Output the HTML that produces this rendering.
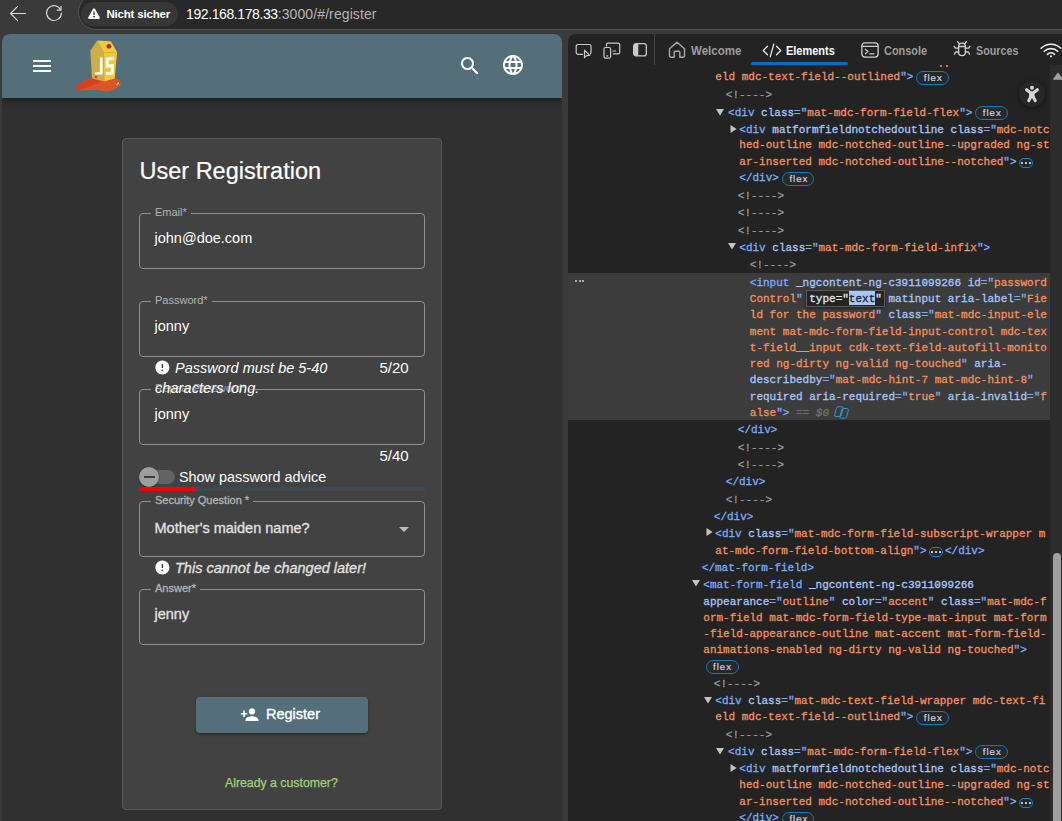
<!DOCTYPE html>
<html lang="en">
<head>
<meta charset="utf-8">
<title>OWASP Juice Shop - User Registration</title>
<style>
*{box-sizing:border-box;margin:0;padding:0}
html,body{width:1062px;height:821px;overflow:hidden}
body{position:relative;background:#3a3a3a;font-family:"Liberation Sans",sans-serif;color:#fff}
.abs{position:absolute}
svg{display:block}

/* ---------- browser chrome ---------- */
#chrome{position:absolute;left:0;top:0;width:1062px;height:34px;background:#3a3a3a}
#addr{position:absolute;left:78px;top:-6px;width:1000px;height:36px;border-radius:18px 0 0 18px;background:#282828;border:1px solid #555}
#chip{position:absolute;left:81px;top:2px;width:97px;height:24px;border-radius:12px;background:#373737}
#chiptxt{position:absolute;left:106.500px;top:6px;font-size:11.500px;letter-spacing:-.2px;line-height:16px;font-weight:bold;color:#fff;white-space:nowrap}
#url{position:absolute;left:186px;top:5px;font-size:14px;line-height:18px;color:#fff;white-space:nowrap}
#url span{color:#b4b4b4;letter-spacing:.1px}

/* ---------- page ---------- */
#page{position:absolute;left:2px;top:34px;width:560px;height:787px;background:#303030;border-radius:8px 8px 0 0;overflow:hidden}
#tb{position:absolute;left:0;top:0;width:560px;height:64px;background:#546e7a;box-shadow:0 2px 4px -1px rgba(0,0,0,.2),0 4px 5px 0 rgba(0,0,0,.14),0 1px 10px 0 rgba(0,0,0,.12)}
#card{position:absolute;left:120px;top:104px;width:320px;height:672px;background:#424242;border:1px solid #595959;border-radius:4px}
#title{-webkit-text-stroke:.2px;position:absolute;left:16.500px;top:17.300px;font-size:23.500px;line-height:30px;color:#fff;white-space:nowrap}
.ff{position:absolute;left:16px;width:286px;height:56px;border:1px solid #8f8f8f;border-radius:4px}
.ff .lb{position:absolute;left:11px;top:-9px;padding:0 4px;background:#424242;font-size:11px;line-height:14px;color:#b5b5b5;white-space:nowrap}
.ff .val{position:absolute;left:14.500px;top:13.800px;font-size:14.500px;line-height:20px;color:#fff;white-space:nowrap}
.hint{position:absolute;font-size:14.5px;line-height:18px;font-style:italic;color:#fff;white-space:nowrap}
.cnt{position:absolute;font-size:15px;line-height:18px;color:#fff;white-space:nowrap}
.hv{-webkit-text-stroke:.3px}.val.hv,.hint.hv{color:#e2e2e2}
.ei{position:absolute;width:16.800px;height:16.800px;fill:#fff}

/* ---------- devtools ---------- */
#dt{position:absolute;left:568px;top:34px;width:494px;height:787px;background:#232323;border-radius:8px 0 0 0;overflow:hidden}
#dtabs{position:absolute;left:0;top:0;width:494px;height:31px}
.tab{position:absolute;top:9px;font-size:13px;line-height:16px;font-weight:bold;color:#9d9d9d;white-space:nowrap;transform-origin:0 50%}
#hl{position:absolute;left:568px;top:273px;width:482px;height:147px;background:#3c3c3c}
#sb{position:absolute;left:1050px;top:65px;width:12px;height:756px;background:#2c2c2c}
#sbt{position:absolute;left:1053px;top:553px;width:8px;height:280px;border-radius:4px;background:#9f9f9f}
.ln{position:absolute;font-family:"Liberation Mono",monospace;font-size:11px;line-height:16px;height:16px;white-space:pre;color:#e3e3e3;-webkit-text-stroke:.3px}
.t{color:#7cacf8}.n{color:#a8c7fa}.v{color:#f29160}.c{color:#999999}
.ar{position:absolute;fill:#c4c4c4}
.bd{display:inline-block;vertical-align:top;margin:1.400px 0 0 3px;height:14px;padding:0 5px 0 6.500px;border:1px solid #1379b8;border-radius:7px;background:#282828;font-family:"Liberation Sans",sans-serif;font-size:9.700px;line-height:12.300px;color:#c9d4e6;letter-spacing:.95px;-webkit-text-stroke:.2px}
.bd.dots{-webkit-text-stroke:0;padding:0 0 0 .5px;margin-left:2px;margin-right:2.400px;height:10px;margin-top:4px;width:14px;letter-spacing:0;font-size:0;line-height:0;border-color:#1585c5;border-radius:5px;position:relative}
.bd.dots i{display:inline-block;width:2.200px;height:2.200px;border-radius:.6px;background:#c3d4f3;margin:3px .9px 0 .9px;vertical-align:top}
.ed{display:inline-block;vertical-align:top;height:17px;margin:-1px -3.500px 0 -3.500px;padding:0 2.500px;border:1px solid #5a5a5a;background:#242424;color:#e6e6e6;box-shadow:0 1px 3px rgba(0,0,0,.5);line-height:16px}
.sel{background:#a8c7fa;color:#1d1d1d;display:inline-block;vertical-align:top;height:14.600px;line-height:16px}
.eq{color:#6f6f6f;font-style:italic}
.cp{display:inline-block;vertical-align:top;margin:1px 0 0 4.700px}
</style>
</head>
<body>

<!-- ================= browser chrome ================= -->
<div id="chrome">
  <svg class="abs" style="left:9px;top:5px" width="18" height="17" viewBox="0 0 18 17" fill="none" stroke="#dadada" stroke-width="1.150" stroke-linecap="round" stroke-linejoin="round"><path d="M16.500 8.500H2M8.600 1.400 1.600 8.500l7 7.100"/></svg>
  <svg class="abs" style="left:45px;top:4px" width="18" height="18" viewBox="0 0 18 18" fill="none" stroke="#dadada" stroke-width="1.150" stroke-linecap="round" stroke-linejoin="round"><path d="M15.700 5.900A7.400 7.400 0 1 0 16.400 9"/><path d="M16 2.200v3.900h-3.900"/></svg>
  <div id="addr"></div>
  <div id="chip"></div>
  <svg class="abs" style="left:88px;top:8px" width="12" height="11" viewBox="0 0 12 11"><path d="M6 .3c.4 0 .8.2 1 .6l4.7 8.300000000000001c.4.8-.1 1.7-1 1.7H1.3c-.9 0-1.4-.9-1-1.7L5 .9c.2-.4.6-.6 1-.6z" fill="#fff"/><rect x="5.3" y="3.3" width="1.4" height="3.8" rx=".7" fill="#373737"/><circle cx="6" cy="8.7" r=".9" fill="#373737"/></svg>
  <div id="chiptxt">Nicht sicher</div>
  <div id="url"><b style="font-weight:normal;letter-spacing:-.4px">192.168.178.33</b><span>:3000/#/register</span></div>
</div>

<!-- ================= page ================= -->
<div id="page">
  <div id="tb">
    <svg class="abs" style="left:28px;top:20px" width="24" height="24" viewBox="0 0 24 24" fill="#fff"><path d="M3 18h18v-2H3v2zm0-5h18v-2H3v2zm0-7v2h18V6H3z"/></svg>
    <!-- juice carton logo -->
    <svg class="abs" style="left:64px;top:0" width="64" height="64" viewBox="0 0 64 64">
      <path d="M9 54.500C10 51 19 47 26 43.500L38 47 49 44.200C54.500 45.500 56.500 49.500 53.500 52 49 55.500 44.500 58.200 39 57.300 31 55 21 56.300 12.500 56.300 9.500 56.300 8.600 55.500 9 54.500Z" fill="#dd5426"/>
      <path d="M9 54.500C10 51 19 47 26 43.500L36 47 28 51C22 53 14 56 12.500 56.300 9.500 56.300 8.600 55.500 9 54.500Z" fill="#d63f1f"/>
      <polygon points="24.300,16.800 31.200,6.400 37.800,18.700 38.200,47.600 26.100,44.400" fill="#cfae45"/>
      <polygon points="31.200,6.400 44.800,7.300 51.100,17.900 37.800,18.700" fill="#efc93f"/>
      <polygon points="37.800,18.700 51.100,17.900 48.700,44.400 38.200,47.600" fill="#f3c738"/>
      <circle cx="42.900" cy="12.300" r="2.400" fill="#b32a1a"/>
      <path d="M33.900 23.400h2.700v17.200h-7.800v-2.300h5.100z" fill="#fff"/>
      <path d="M39.800 23.400l8.500-.7v3l-5.600.5v4.200l5.300-.5-.5 10.400-7.500 1v-3l4.800-.6.200-4.500-5.200.5z" fill="#fff"/>
      <circle cx="29.800" cy="43" r="1.300" fill="#d63f1f"/>
      <path d="M50.500 50.500l2-2.500.4 1.500-1.400 1.600z" fill="#fff"/>
    </svg>
    <svg class="abs" style="left:456px;top:20px" width="24" height="24" viewBox="0 0 24 24" fill="#fff"><path d="M15.5 14h-.79l-.28-.27C15.410 12.590 16 11.110 16 9.500 16 5.910 13.090 3 9.500 3S3 5.910 3 9.500 5.910 16 9.500 16c1.610 0 3.090-.59 4.230-1.570l.27.28v.79l5 4.990L20.490 19l-4.990-5zm-6 0C7.010 14 5 11.990 5 9.500S7.010 5 9.500 5 14 7.010 14 9.500 11.990 14 9.500 14z"/></svg>
    <svg class="abs" style="left:499px;top:19px" width="24" height="24" viewBox="0 0 24 24" fill="#fff"><path d="M11.990 2C6.470 2 2 6.480 2 12s4.470 10 9.990 10C17.520 22 22 17.520 22 12S17.520 2 11.990 2zm6.930 6h-2.950c-.32-1.250-.78-2.450-1.380-3.560 1.840.63 3.370 1.910 4.330 3.560zM12 4.040c.83 1.200 1.480 2.530 1.910 3.960h-3.820c.43-1.430 1.080-2.760 1.910-3.960zM4.260 14C4.100 13.360 4 12.690 4 12s.1-1.360.26-2h3.380c-.08.66-.14 1.320-.14 2 0 .68.060 1.340.14 2H4.260zm.82 2h2.950c.32 1.250.78 2.450 1.380 3.560-1.840-.63-3.370-1.900-4.330-3.560zm2.950-8H5.080c.96-1.660 2.490-2.930 4.330-3.560C8.810 5.550 8.350 6.750 8.030 8zM12 19.960c-.83-1.200-1.480-2.530-1.910-3.960h3.820c-.43 1.430-1.080 2.760-1.910 3.960zM14.340 14H9.660c-.09-.66-.16-1.320-.16-2 0-.68.070-1.350.16-2h4.680c.09.65.16 1.320.16 2 0 .68-.07 1.340-.16 2zm.25 5.560c.6-1.110 1.060-2.310 1.380-3.560h2.950c-.96 1.650-2.490 2.930-4.330 3.560zM16.360 14c.08-.66.14-1.320.14-2 0-.68-.06-1.340-.14-2h3.380c.16.64.26 1.310.26 2s-.1 1.360-.26 2h-3.380z"/></svg>
  </div>

  <div id="card">
    <div id="title">User Registration</div>

    <!-- Email -->
    <div class="ff" style="top:74px"><span class="lb">Email*</span><span class="val">john@doe.com</span></div>

    <!-- Password -->
    <div class="ff" style="top:162px"><span class="lb">Password*</span><span class="val">jonny</span></div>
    <svg class="ei" style="left:30.900px;top:220.200px" viewBox="0 0 24 24"><path d="M12 2C6.480 2 2 6.480 2 12s4.480 10 10 10 10-4.480 10-10S17.520 2 12 2zm1 15h-2v-2h2v2zm0-4h-2V7h2v6z"/></svg>
    <div class="hint" style="left:52px;top:220px">Password must be 5-40</div>
    <div class="cnt" style="left:256.400px;top:220px">5/20</div>

    <!-- Repeat password (label hidden behind wrapped hint) -->
    <div class="ff" style="top:250px"><span class="lb" style="color:#a0a0a0">Repeat Password*</span><span class="val">jonny</span></div>
    <div class="hint" style="left:32px;top:240px;letter-spacing:.08px">characters long.</div>
    <div class="cnt" style="left:256.400px;top:308px">5/40</div>

    <!-- toggle -->
    <div class="abs" style="left:20px;top:331px;width:32px;height:14px;border-radius:7px;background:#636363"></div>
    <div class="abs" style="left:16px;top:328px;width:20px;height:20px;border-radius:10px;background:#9e9e9e;box-shadow:0 1px 2px rgba(0,0,0,.4)"></div>
    <div class="abs" style="left:20.500px;top:337px;width:11px;height:2px;background:#3c3c3c"></div>
    <div class="abs" style="left:56px;top:328px;font-size:14.400px;line-height:20px;color:#fff;white-space:nowrap" id="spa">Show password advice</div>
    <!-- strength bar -->
    <div class="abs" style="left:16px;top:348px;width:286px;height:4px;background:#3e4a51"></div>
    <div class="abs" style="left:16px;top:348px;width:57px;height:4px;background:#fb0000"></div>

    <!-- Security question -->
    <div class="ff" style="top:362px"><span class="lb hv">Security Question *</span><span class="val hv" style="top:15.800px">Mother's maiden name?</span>
      <svg class="abs" style="left:259px;top:25px" width="10" height="5" viewBox="0 0 10 5"><path d="M0 0h10L5 5z" fill="#bdbdbd"/></svg>
    </div>
    <svg class="ei" style="left:30.900px;top:420.200px" viewBox="0 0 24 24"><path d="M12 2C6.480 2 2 6.480 2 12s4.480 10 10 10 10-4.480 10-10S17.520 2 12 2zm1 15h-2v-2h2v2zm0-4h-2V7h2v6z"/></svg>
    <div class="hint hv" style="left:52px;top:420px">This cannot be changed later!</div>

    <!-- Answer -->
    <div class="ff" style="top:450px"><span class="lb hv">Answer*</span><span class="val hv" style="top:13.600px">jenny</span></div>

    <!-- Register button -->
    <div class="abs" id="btn" style="left:73px;top:558px;width:172px;height:36px;border-radius:4px;background:#546e7a;box-shadow:0 3px 1px -2px rgba(0,0,0,.2),0 2px 2px 0 rgba(0,0,0,.14),0 1px 5px 0 rgba(0,0,0,.12)">
      <svg class="abs" style="left:43.700px;top:8px" width="19.200" height="19.200" viewBox="0 0 24 24" fill="#fff"><path d="M15 12c2.210 0 4-1.790 4-4s-1.790-4-4-4-4 1.790-4 4 1.790 4 4 4zm-9-2V7H4v3H1v2h3v3h2v-3h3v-2H6zm9 4c-2.670 0-8 1.340-8 4v2h16v-2c0-2.660-5.330-4-8-4z"/></svg>
      <div class="abs" id="btntxt" style="-webkit-text-stroke:.35px;left:70px;top:7px;font-size:14.500px;line-height:20px;color:#fff;white-space:nowrap">Register</div>
    </div>

    <div class="abs" id="already" style="left:102px;top:636px;-webkit-text-stroke:.25px;font-size:12.300px;line-height:16px;color:#a0d471;white-space:nowrap">Already a customer?</div>
  </div>
</div>

<!-- ================= devtools ================= -->
<div id="dt">
  <div id="dtabs">
    <!-- inspect -->
    <svg class="abs" style="left:7px;top:9px" width="18" height="16" viewBox="0 0 18 16" fill="none" stroke="#c9c9c9" stroke-width="1.200" stroke-linejoin="round"><path d="M8 11.400H3A1.800 1.800 0 0 1 1.200 9.600V3.300A1.800 1.800 0 0 1 3 1.500h11.200A1.800 1.800 0 0 1 16 3.300v6.300a1.800 1.800 0 0 1-1 1.600"/><path d="M9.500 7.200v7.500l2-2 3.200-.2z"/></svg>
    <!-- device -->
    <svg class="abs" style="left:35px;top:8px" width="18" height="17" viewBox="0 0 18 17" fill="none" stroke="#c9c9c9" stroke-width="1.200" stroke-linejoin="round"><path d="M3.500 4.500V2.800A1.600 1.600 0 0 1 5.100 1.200h10A1.600 1.600 0 0 1 16.700 2.800v7.400a1.600 1.600 0 0 1-1.600 1.600H9.800"/><rect x="1" y="5.500" width="6.600" height="10.700" rx="1.500"/><path d="M3.800 13.900h1M10 9h2.600" stroke-linecap="round"/></svg>
    <!-- dock -->
    <svg class="abs" style="left:64.500px;top:9px" width="14" height="13.500" viewBox="0 0 15 14" preserveAspectRatio="none"><rect x=".7" y=".7" width="13.600" height="12.600" rx="2.500" fill="none" stroke="#c9c9c9" stroke-width="1.400"/><path d="M3.200 .7h2.500v12.600H3.200A2.500 2.500 0 0 1 .7 10.800V3.200A2.500 2.500 0 0 1 3.200 .7z" fill="#c9c9c9"/></svg>
    <div class="abs" style="left:86px;top:0;width:1px;height:31px;background:#454545"></div>
    <!-- home -->
    <svg class="abs" style="left:100px;top:7px" width="18" height="17" viewBox="0 0 18 17" fill="none" stroke="#a9a9a9" stroke-width="1.400" stroke-linejoin="round"><path d="M1.500 7.800 9 1.200l7.500 6.600v7a1.400 1.400 0 0 1-1.400 1.400h-3.300v-5a1 1 0 0 0-1-1H7.200a1 1 0 0 0-1 1v5H2.900a1.400 1.400 0 0 1-1.400-1.400z"/></svg>
    <div class="tab" id="t1" style="left:123px;transform:scaleX(.887)">Welcome</div>
    <!-- code icon -->
    <svg class="abs" style="left:194px;top:9px" width="20" height="15" viewBox="0 0 20 15" fill="none" stroke="#ededed" stroke-width="1.250" stroke-linecap="round" stroke-linejoin="round"><path d="M5.500 3.200 1.200 7.500l4.300 4.300M14.500 3.200l4.300 4.300-4.300 4.300M11.800 1.200 8.200 13.800"/></svg>
    <div class="tab" id="t2" style="left:218.400px;color:#fff;transform:scaleX(.843)">Elements</div>
    <div class="abs" style="left:183px;top:28px;width:97px;height:3px;border-radius:1.500px;background:#0f6cbd"></div>
    <!-- console icon -->
    <svg class="abs" style="left:293px;top:8px" width="18" height="16" viewBox="0 0 18 16" fill="none" stroke="#d0d0d0" stroke-width="1.300" stroke-linecap="round" stroke-linejoin="round"><rect x=".9" y=".9" width="16.200" height="14.200" rx="3"/><path d="M.9 4.300h16.200M4.300 7.300l2.600 2.200-2.600 2.200M8.800 11.900h4.200"/></svg>
    <div class="tab" id="t3" style="left:316px;transform:scaleX(.842)">Console</div>
    <!-- bug icon -->
    <svg class="abs" style="left:385px;top:6px" width="18" height="18" viewBox="0 0 18 18" fill="none" stroke="#d0d0d0" stroke-width="1.300" stroke-linecap="round" stroke-linejoin="round"><path d="M5.600 6.500a3.400 3.400 0 0 1 6.800 0v5.700a3.400 3.400 0 0 1-6.800 0z"/><path d="M6.200 3.700 4.600 1.600M11.800 3.700l1.600-2.100M5.600 8.200H2.400L1.200 6.300M12.400 8.200h3.200l1.200-1.900M5.600 12H2.600l-1.200 2.200M12.400 12h3l1.200 2.200M5.600 6.500h6.800"/></svg>
    <div class="tab" id="t4" style="left:408px;transform:scaleX(.828)">Sources</div>
    <!-- wifi -->
    <svg class="abs" style="left:472px;top:9px" width="22" height="15" viewBox="0 0 22 15" fill="none" stroke="#efefef" stroke-width="1.600" stroke-linecap="round"><path d="M1.200 5.200a14 14 0 0 1 19.600 0M4.300 8.300a9.600 9.600 0 0 1 13.400 0M7.400 11.300a5.200 5.200 0 0 1 7.200 0"/><circle cx="11" cy="13.300" r="1.100" fill="#efefef" stroke="none"/></svg>
  </div>
</div>
<div id="hl"></div>
<div class="abs" style="left:575px;top:280px;width:9px;height:3px">
  <i class="abs" style="left:0;top:0;width:2px;height:2px;border-radius:1px;background:#d5d5d5"></i>
  <i class="abs" style="left:3.500px;top:0;width:2px;height:2px;border-radius:1px;background:#d5d5d5"></i>
  <i class="abs" style="left:7px;top:0;width:2px;height:2px;border-radius:1px;background:#d5d5d5"></i>
</div>
<div id="sb"></div>
<div id="sbt"></div>
<svg class="abs" style="left:1052.500px;top:71.700px" width="10" height="8" viewBox="0 0 10 8"><path d="M5 .8 9.700 7.300H.3z" fill="#a3a3a3" stroke="#a3a3a3" stroke-width=".8" stroke-linejoin="round"/></svg>
<!-- stray pixels of the clipped previous line -->
<div class="abs" style="left:940px;top:65px;width:2px;height:2px;background:#c9774f"></div>
<div class="abs" style="left:946px;top:65px;width:2px;height:2px;background:#c9774f"></div>

<div id="codewrap">
<div class="ln" style="left:715.3px;top:69.3px"><span class="v">eld mdc-text-field--outlined</span><span class="t">"&gt;</span><span class="bd">flex</span></div>
<div class="ln" style="left:725.8px;top:87.4px"><span class="c">&lt;!----&gt;</span></div>
<div class="ln" style="left:728.1px;top:105.0px"><span class="t">&lt;div</span><span class="n"> class</span><span class="t">="</span><span class="v">mat-mdc-form-field-flex</span><span class="t">"&gt;</span><span class="bd">flex</span></div>
<svg class="ar" style="left:716.0px;top:108.8px" width="8" height="7" viewBox="0 0 8 7"><path d="M0 0H8L4 6.600Z"/></svg>
<div class="ln" style="left:739.3px;top:121.8px"><span class="t">&lt;div</span><span class="n"> matformfieldnotchedoutline class</span><span class="t">="</span><span class="v">mdc-notc</span></div>
<svg class="ar" style="left:729.5px;top:124.5px" width="7" height="8" viewBox="0 0 7 8"><path d="M0.5 0V8L6.6 4Z"/></svg>
<div class="ln" style="left:739.3px;top:137.4px"><span class="v">hed-outline mdc-notched-outline--upgraded ng-st</span></div>
<div class="ln" style="left:739.3px;top:153.6px"><span class="v">ar-inserted mdc-notched-outline--notched</span><span class="t">"&gt;</span><span class="bd dots"><i></i><i></i><i></i></span></div>
<div class="ln" style="left:739.3px;top:170.4px"><span class="t">&lt;/div&gt;</span><span class="bd">flex</span></div>
<div class="ln" style="left:737.8px;top:188.4px"><span class="c">&lt;!----&gt;</span></div>
<div class="ln" style="left:737.8px;top:205.4px"><span class="c">&lt;!----&gt;</span></div>
<div class="ln" style="left:737.8px;top:222.6px"><span class="c">&lt;!----&gt;</span></div>
<div class="ln" style="left:739.3px;top:239.6px"><span class="t">&lt;div</span><span class="n"> class</span><span class="t">="</span><span class="v">mat-mdc-form-field-infix</span><span class="t">"&gt;</span></div>
<svg class="ar" style="left:728.0px;top:243.4px" width="8" height="7" viewBox="0 0 8 7"><path d="M0 0H8L4 6.600Z"/></svg>
<div class="ln" style="left:749.8px;top:257.4px"><span class="c">&lt;!----&gt;</span></div>
<div class="ln" style="left:749.8px;top:275.0px"><span class="t">&lt;input</span><span class="n"> _ngcontent-ng-c3911099266 id</span><span class="t">="</span><span class="v">password</span></div>
<div class="ln" style="left:749.8px;top:290.9px"><span class="v">Control</span><span class="t">"</span> <span class="ed">type="<span class="sel">text</span>"</span><span class="n"> matinput aria-label</span><span class="t">="</span><span class="v">Fie</span></div>
<div class="ln" style="left:749.8px;top:307.4px"><span class="v">ld for the password</span><span class="t">"</span><span class="n"> class</span><span class="t">="</span><span class="v">mat-mdc-input-ele</span></div>
<div class="ln" style="left:749.8px;top:323.7px"><span class="v">ment mat-mdc-form-field-input-control mdc-tex</span></div>
<div class="ln" style="left:749.8px;top:339.7px"><span class="v">t-field__input cdk-text-field-autofill-monito</span></div>
<div class="ln" style="left:749.8px;top:355.9px"><span class="v">red ng-dirty ng-valid ng-touched</span><span class="t">"</span><span class="n"> aria-</span></div>
<div class="ln" style="left:749.8px;top:372.4px"><span class="n">describedby</span><span class="t">="</span><span class="v">mat-mdc-hint-7 mat-mdc-hint-8</span><span class="t">"</span></div>
<div class="ln" style="left:749.8px;top:388.8px"><span class="n">required aria-required</span><span class="t">="</span><span class="v">true</span><span class="t">"</span><span class="n"> aria-invalid</span><span class="t">="</span><span class="v">f</span></div>
<div class="ln" style="left:749.8px;top:405.3px"><span class="v">alse</span><span class="t">"&gt;</span><span class="eq"> == $0</span><svg class="cp" width="15" height="13" viewBox="0 0 15 13" fill="none" stroke="#2b9bd9" stroke-width="1" stroke-linejoin="round"><path d="M4.400 .8h3.200a1.500 1.500 0 0 1 1.450 1.900l-1.700 6.200a2.200 2.200 0 0 1-2.100 1.600H2.100a1.500 1.500 0 0 1-1.450-1.900l1.700-6.200A2.200 2.200 0 0 1 4.400 .8z"/><path d="M9.700 2.500h3.200a1.500 1.500 0 0 1 1.450 1.900l-1.700 6.200a2.200 2.200 0 0 1-2.100 1.600H7.400a1.500 1.500 0 0 1-1.450-1.900l1.700-6.200a2.200 2.200 0 0 1 2.050-1.600z"/></svg></div>
<div class="ln" style="left:737.8px;top:421.8px"><span class="t">&lt;/div&gt;</span></div>
<div class="ln" style="left:737.8px;top:440.1px"><span class="c">&lt;!----&gt;</span></div>
<div class="ln" style="left:737.8px;top:457.3px"><span class="c">&lt;!----&gt;</span></div>
<div class="ln" style="left:725.8px;top:473.7px"><span class="t">&lt;/div&gt;</span></div>
<div class="ln" style="left:725.8px;top:492.1px"><span class="c">&lt;!----&gt;</span></div>
<div class="ln" style="left:713.8px;top:508.6px"><span class="t">&lt;/div&gt;</span></div>
<div class="ln" style="left:715.3px;top:525.6px"><span class="t">&lt;div</span><span class="n"> class</span><span class="t">="</span><span class="v">mat-mdc-form-field-subscript-wrapper m</span></div>
<svg class="ar" style="left:705.5px;top:528.3px" width="7" height="8" viewBox="0 0 7 8"><path d="M0.5 0V8L6.6 4Z"/></svg>
<div class="ln" style="left:715.3px;top:542.7px"><span class="v">at-mdc-form-field-bottom-align</span><span class="t">"&gt;</span><span class="bd dots"><i></i><i></i><i></i></span><span class="t">&lt;/div&gt;</span></div>
<div class="ln" style="left:701.8px;top:559.5px"><span class="t">&lt;/mat-form-field&gt;</span></div>
<div class="ln" style="left:703.3px;top:576.5px"><span class="t">&lt;mat-form-field</span><span class="n"> _ngcontent-ng-c3911099266</span></div>
<svg class="ar" style="left:692.0px;top:580.3px" width="8" height="7" viewBox="0 0 8 7"><path d="M0 0H8L4 6.600Z"/></svg>
<div class="ln" style="left:703.3px;top:593.6px"><span class="n">appearance</span><span class="t">="</span><span class="v">outline</span><span class="t">"</span><span class="n"> color</span><span class="t">="</span><span class="v">accent</span><span class="t">"</span><span class="n"> class</span><span class="t">="</span><span class="v">mat-mdc-f</span></div>
<div class="ln" style="left:703.3px;top:609.6px"><span class="v">orm-field mat-mdc-form-field-type-mat-input mat-form</span></div>
<div class="ln" style="left:703.3px;top:625.9px"><span class="v">-field-appearance-outline mat-accent mat-form-field-</span></div>
<div class="ln" style="left:703.3px;top:642.2px"><span class="v">animations-enabled ng-dirty ng-valid ng-touched</span><span class="t">"&gt;</span></div>
<div class="ln" style="left:702.3px;top:659.1px"><span class="bd" style="margin-left:3.300px;padding-right:6px">flex</span></div>
<div class="ln" style="left:713.8px;top:676.4px"><span class="c">&lt;!----&gt;</span></div>
<div class="ln" style="left:715.3px;top:692.8px"><span class="t">&lt;div</span><span class="n"> class</span><span class="t">="</span><span class="v">mat-mdc-text-field-wrapper mdc-text-fi</span></div>
<svg class="ar" style="left:704.0px;top:696.6px" width="8" height="7" viewBox="0 0 8 7"><path d="M0 0H8L4 6.600Z"/></svg>
<div class="ln" style="left:715.3px;top:709.4px"><span class="v">eld mdc-text-field--outlined</span><span class="t">"&gt;</span><span class="bd">flex</span></div>
<div class="ln" style="left:725.8px;top:727.3px"><span class="c">&lt;!----&gt;</span></div>
<div class="ln" style="left:728.1px;top:743.9px"><span class="t">&lt;div</span><span class="n"> class</span><span class="t">="</span><span class="v">mat-mdc-form-field-flex</span><span class="t">"&gt;</span><span class="bd">flex</span></div>
<svg class="ar" style="left:716.0px;top:747.7px" width="8" height="7" viewBox="0 0 8 7"><path d="M0 0H8L4 6.600Z"/></svg>
<div class="ln" style="left:739.3px;top:761.3px"><span class="t">&lt;div</span><span class="n"> matformfieldnotchedoutline class</span><span class="t">="</span><span class="v">mdc-notc</span></div>
<svg class="ar" style="left:729.5px;top:764.0px" width="7" height="8" viewBox="0 0 7 8"><path d="M0.5 0V8L6.6 4Z"/></svg>
<div class="ln" style="left:739.3px;top:777.4px"><span class="v">hed-outline mdc-notched-outline--upgraded ng-st</span></div>
<div class="ln" style="left:739.3px;top:793.7px"><span class="v">ar-inserted mdc-notched-outline--notched</span><span class="t">"&gt;</span><span class="bd dots"><i></i><i></i><i></i></span></div>
<div class="ln" style="left:739.3px;top:810.4px"><span class="t">&lt;/div&gt;</span><span class="bd">flex</span></div>
</div>

<!-- accessibility floating button -->
<div class="abs" style="left:1019px;top:80.500px;width:26px;height:26.500px;border-radius:13.200px;background:#272727;box-shadow:0 1px 4px rgba(0,0,0,.55)">
  <svg class="abs" style="left:5px;top:4.500px" width="16" height="18" viewBox="0 0 16 18" fill="#d6d6d6" stroke="#d6d6d6" stroke-linecap="round" stroke-linejoin="round"><circle cx="8" cy="2.800" r="2" stroke="none"/><path d="M2.600 4.700 7.200 8.300M13.400 4.700 8.800 8.300" stroke-width="3.100" fill="none"/><path d="M6.300 7h3.400l.6 5.500H5.700z" stroke-width="1"/><path d="M6.800 12 4.700 15.800M9.200 12l2.100 3.800" stroke-width="3" fill="none"/></svg>
</div>

</body>
</html>
